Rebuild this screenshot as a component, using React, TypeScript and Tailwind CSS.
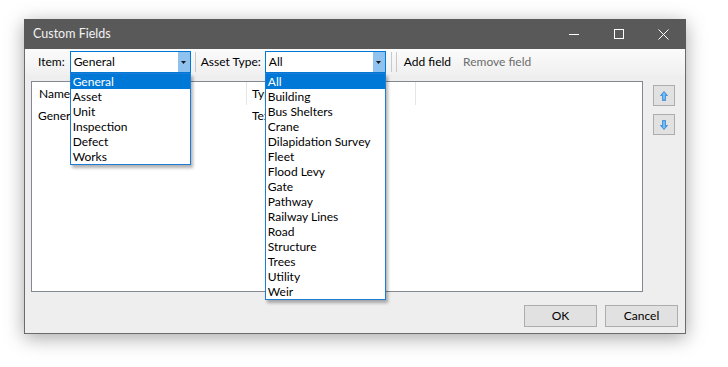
import React from 'react';

const itemOptions = ['General', 'Asset', 'Unit', 'Inspection', 'Defect', 'Works'];
const assetOptions = [
  'All', 'Building', 'Bus Shelters', 'Crane', 'Dilapidation Survey', 'Fleet', 'Flood Levy',
  'Gate', 'Pathway', 'Railway Lines', 'Road', 'Structure', 'Trees', 'Utility', 'Weir',
];

const font = { fontFamily: '"Lato", "Liberation Sans", sans-serif' };

// Open combo box with its dropdown list showing
const Combo = ({ value, options }: { value: string; options: string[] }) => (
  <div className="relative w-[121px] h-[22px]">
    <div className="flex h-full border border-[#0078d7] bg-white">
      <div className="flex-1 pl-[3px] text-[12px] leading-[20px] text-black">{value}</div>
      <div className="w-[12px] h-full bg-[#8fc2ef] flex items-center justify-center">
        <svg width="5" height="3" viewBox="0 0 5 3"><polygon points="0,0 5,0 2.5,3" fill="#1a1a1a" /></svg>
      </div>
    </div>
    <div className="absolute left-0 top-[22px] w-[121px] z-10 bg-white border border-[#1c7cd6] shadow-[2px_3px_3px_rgba(0,0,0,0.3)]">
      {options.map((o) => (
        <div
          key={o}
          className={
            o === value
              ? 'h-[15px] pl-[2px] text-[12px] leading-[15px] bg-[#0078d7] text-white'
              : 'h-[15px] pl-[2px] text-[12px] leading-[15px] text-black'
          }
        >
          {o}
        </div>
      ))}
    </div>
  </div>
);

const Arrow = ({ down }: { down?: boolean }) => (
  <svg width="8" height="10" viewBox="0 0 8 10" className={down ? 'rotate-180' : ''}>
    <polygon points="4,0.5 7.5,4.5 5.5,4.5 5.5,9.5 2.5,9.5 2.5,4.5 0.5,4.5" fill="#4aa5ee" stroke="#2a7fd0" strokeWidth="0.7" />
    <line x1="4" y1="2" x2="4" y2="8.5" stroke="#cfe8fc" strokeWidth="0.7" />
  </svg>
);

const App = () => {
  return (
    <div className="w-[728px] h-[367px] bg-white overflow-hidden pt-[19px] pl-[24px]" style={font}>
      <div className="w-[662px] h-[315px] flex flex-col bg-[#eeeeee] border-x border-b border-[#6b6b6b] shadow-[0_4px_18px_rgba(0,0,0,0.35)]">
        {/* title bar */}
        <div className="h-[30px] -mx-px bg-[#595959] flex items-center text-white">
          <div className="flex-1 pl-[9px] text-[12.5px] text-[#f2f2f2]">Custom Fields</div>
          <div className="w-[45px] h-full flex items-center justify-center">
            <div className="w-[10px] h-px bg-white" />
          </div>
          <div className="w-[45px] h-full flex items-center justify-center">
            <div className="w-[10px] h-[10px] border border-white" />
          </div>
          <div className="w-[45px] h-full flex items-center justify-center">
            <svg width="11" height="11" viewBox="0 0 11 11">
              <path d="M0.5 0.5 L10.5 10.5 M10.5 0.5 L0.5 10.5" stroke="#ffffff" strokeWidth="1" />
            </svg>
          </div>
        </div>

        {/* toolbar */}
        <div className="h-[26px] pt-[2px] flex items-start bg-gradient-to-b from-[#fbfbfb] to-[#f0f0f0] text-[12px] text-black">
          <span className="ml-[13px] mr-[5px] leading-[22px]">Item:</span>
          <Combo value="General" options={itemOptions} />
          <div className="ml-[4px] mt-[1px] w-px h-[20px] bg-[#c9c9c9]" />
          <span className="ml-[5px] mr-[4px] leading-[22px]">Asset Type:</span>
          <Combo value="All" options={assetOptions} />
          <div className="ml-[5px] mt-[1px] w-px h-[20px] bg-[#c9c9c9]" />
          <div className="ml-[4px] mt-[1px] w-px h-[20px] bg-[#c9c9c9]" />
          <span className="ml-[7px] leading-[22px]">Add field</span>
          <span className="ml-[12px] leading-[22px] text-[#6d6d6d]">Remove field</span>
        </div>

        {/* list + order buttons */}
        <div className="flex mt-[6px] ml-[6px]">
          <div className="w-[612px] h-[211px] bg-white border border-[#828790] text-[12px] text-black">
            <div className="flex h-[23px] items-center">
              <div className="w-[214px] pl-[7px]">Name</div>
              <div className="w-px h-full bg-[#e5e5e5]" />
              <div className="w-[168px] pl-[5px]">Type</div>
              <div className="w-px h-full bg-[#e5e5e5]" />
            </div>
            <div className="flex h-[17px] mt-[2px] items-center">
              <div className="w-[215px] pl-[6px]">General</div>
              <div className="pl-[5px]">Text</div>
            </div>
          </div>
          <div className="ml-[10px] pt-[4px] flex flex-col gap-[8px]">
            <div className="w-[22px] h-[21px] bg-[#e1e1e1] border border-[#adadad] flex items-center justify-center">
              <Arrow />
            </div>
            <div className="w-[22px] h-[21px] bg-[#e1e1e1] border border-[#adadad] flex items-center justify-center">
              <Arrow down />
            </div>
          </div>
        </div>

        {/* dialog buttons */}
        <div className="flex justify-end gap-[8px] mt-[13px] mr-[7px] text-[12px] text-black">
          <div className="w-[73px] h-[22px] bg-[#e1e1e1] border border-[#adadad] flex items-center justify-center">OK</div>
          <div className="w-[73px] h-[22px] bg-[#e1e1e1] border border-[#adadad] flex items-center justify-center">Cancel</div>
        </div>
      </div>
    </div>
  );
};

export default App;
